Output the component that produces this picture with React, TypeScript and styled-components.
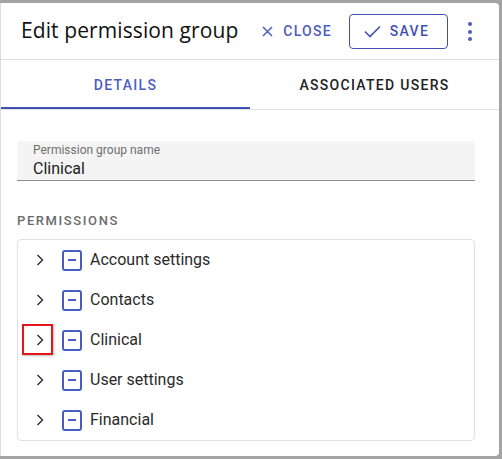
import React from 'react';
import styled, { createGlobalStyle } from 'styled-components';

const GlobalStyle = createGlobalStyle`
  html, body {
    margin: 0;
    padding: 0;
    background: #a3a3a3;
    font-family: Roboto, 'Liberation Sans', sans-serif;
  }
  * { box-sizing: border-box; }
`;

const Backdrop = styled.div`
  height: 459px;
  width: 502px;
  padding: 3px 3px 3px 0;
  overflow: hidden;
`;

const Panel = styled.div`
  position: relative;
  height: 100%;
  background: #fff;
  border-left: 1px solid #dcdcdc;
  border-radius: 0 4px 4px 0;
  display: flex;
  flex-direction: column;
`;

const Header = styled.div`
  height: 57px;
  display: flex;
  align-items: center;
  padding: 0 27px 0 20px;
  border-bottom: 1px solid #e0e0e0;
`;

const Title = styled.h1`
  margin: 0;
  flex: 1;
  font-family: 'Open Sans', sans-serif;
  font-weight: 400;
  font-size: 21px;
  color: #111;
  letter-spacing: 0.1px;
  margin-top: -2px;
`;

const TextButton = styled.button`
  border: none;
  background: none;
  display: flex;
  align-items: center;
  gap: 10px;
  padding: 0;
  margin-right: 17px;
  color: #4d5dbf;
  font-family: Roboto, sans-serif;
  font-weight: 500;
  font-size: 14px;
  letter-spacing: 1.3px;
`;

const OutlineButton = styled.button`
  width: 99px;
  height: 35px;
  border: 1px solid #3f51b5;
  border-radius: 4px;
  background: #fff;
  display: flex;
  align-items: center;
  justify-content: center;
  gap: 9px;
  padding: 0 4px 0 0;
  color: #3f51b5;
  font-family: Roboto, sans-serif;
  font-weight: 500;
  font-size: 14px;
  letter-spacing: 1.3px;
`;

const Kebab = styled.div`
  margin-left: 20px;
  display: flex;
  flex-direction: column;
  gap: 3.5px;
  padding-top: 1px;
`;

const Dot = styled.span`
  width: 4px;
  height: 4px;
  border-radius: 50%;
  background: #4d5dbf;
`;

const Tabs = styled.div`
  display: flex;
  height: 50px;
  border-bottom: 1px solid #e0e0e0;
`;

const Tab = styled.div<{ $active?: boolean }>`
  flex: 1;
  display: flex;
  align-items: center;
  justify-content: center;
  font-family: Roboto, sans-serif;
  font-weight: 500;
  font-size: 14px;
  letter-spacing: 1.3px;
  color: ${(p) => (p.$active ? '#4d5dbf' : '#222')};
  border-bottom: 2px solid ${(p) => (p.$active ? '#3f51b5' : 'transparent')};
  padding-top: 2px;
`;

const Body = styled.div`
  padding: 31px 24px 0 16px;
`;

const Field = styled.div`
  height: 40px;
  background: #f4f4f4;
  border-radius: 4px 4px 0 0;
  border-bottom: 1px solid #8f8f8f;
  padding: 2px 16px 0 16px;
`;

const FieldLabel = styled.div`
  font-size: 12px;
  color: #6f6f6f;
  line-height: 15px;
`;

const FieldValue = styled.div`
  font-size: 16px;
  color: #222;
  line-height: 21px;
`;

const SectionLabel = styled.div`
  margin-top: 32px;
  font-size: 13px;
  font-weight: 500;
  letter-spacing: 1.6px;
  color: #6b6b6b;
  line-height: 16px;
`;

const Tree = styled.div`
  margin-top: 10px;
  border: 1px solid #e0e0e0;
  border-radius: 4px;
`;

const Row = styled.div`
  position: relative;
  height: 40px;
  display: flex;
  align-items: center;
  padding-left: 16px;
`;

const Chevron = styled.span`
  width: 12px;
  display: flex;
  justify-content: center;
  margin-right: 16px;
`;

const Check = styled.span`
  width: 20px;
  height: 21px;
  border: 2px solid #4a5bc2;
  border-radius: 3px;
  display: flex;
  align-items: center;
  justify-content: center;
  margin-right: 8px;
`;

const Dash = styled.span`
  width: 8px;
  height: 2.5px;
  background: #4a5bc2;
`;

const RowLabel = styled.span`
  font-size: 16px;
  color: #2a2a2a;
  padding-bottom: 1px;
`;

const Highlight = styled.div`
  position: absolute;
  left: 4px;
  top: 4px;
  width: 31px;
  height: 31px;
  border: 2px solid #e8141c;
  box-shadow: 1px 1px 2px rgba(0, 0, 0, 0.25);
`;

const CloseIcon = () => (
  <svg width="11" height="11" viewBox="0 0 11 11">
    <path d="M1 1 L10 10 M10 1 L1 10" stroke="#4d5dbf" strokeWidth="1.5" />
  </svg>
);

const CheckIcon = () => (
  <svg width="17" height="13" viewBox="0 0 17 13">
    <path d="M1 6.5 L6 11.5 L16 1.5" stroke="#3f51b5" strokeWidth="1.6" fill="none" />
  </svg>
);

const ChevronIcon = () => (
  <svg width="8" height="12" viewBox="0 0 8 12">
    <path d="M1.5 1 L6.5 6 L1.5 11" stroke="#2a2a2a" strokeWidth="1.4" fill="none" />
  </svg>
);

const permissions = ['Account settings', 'Contacts', 'Clinical', 'User settings', 'Financial'];

export default function App() {
  return (
    <>
      <GlobalStyle />
      <Backdrop>
        <Panel>
          <Header>
            <Title>Edit permission group</Title>
            <TextButton>
              <CloseIcon />
              CLOSE
            </TextButton>
            <OutlineButton>
              <CheckIcon />
              SAVE
            </OutlineButton>
            <Kebab>
              <Dot />
              <Dot />
              <Dot />
            </Kebab>
          </Header>
          <Tabs>
            <Tab $active>DETAILS</Tab>
            <Tab>ASSOCIATED USERS</Tab>
          </Tabs>
          <Body>
            <Field>
              <FieldLabel>Permission group name</FieldLabel>
              <FieldValue>Clinical</FieldValue>
            </Field>
            <SectionLabel>PERMISSIONS</SectionLabel>
            <Tree>
              {permissions.map((name) => (
                <Row key={name}>
                  <Chevron>
                    <ChevronIcon />
                  </Chevron>
                  <Check>
                    <Dash />
                  </Check>
                  <RowLabel>{name}</RowLabel>
                  {name === 'Clinical' && <Highlight />}
                </Row>
              ))}
            </Tree>
          </Body>
        </Panel>
      </Backdrop>
    </>
  );
}
